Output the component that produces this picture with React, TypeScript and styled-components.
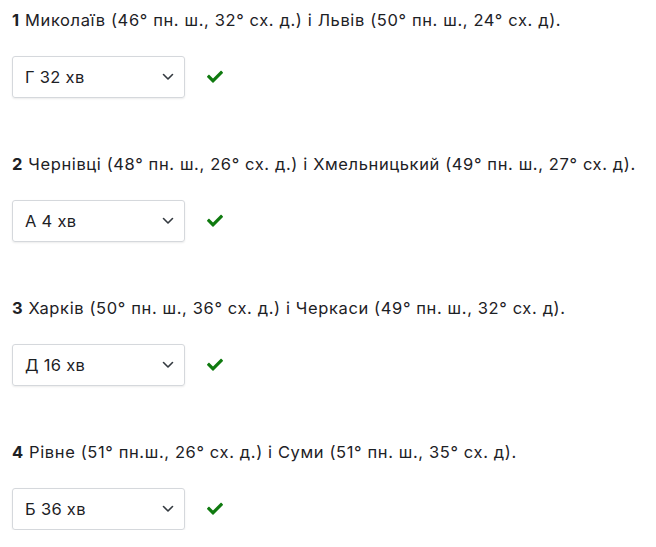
import React from "react";
import styled, { createGlobalStyle } from "styled-components";

const Global = createGlobalStyle`
  html, body { margin: 0; padding: 0; background: #fff; }
  body { font-family: Inter, "Noto Sans", sans-serif; color: #1d2125; }
`;

const Page = styled.div`
  padding: 8px 12px 0 12px;
  display: flex;
  flex-direction: column;
  gap: 54px;
`;

const Item = styled.div`
  display: flex;
  flex-direction: column;
`;

const Title = styled.div`
  font-size: 16.5px;
  letter-spacing: 0.62px;
  line-height: 24px;
  margin-bottom: 24px;
  white-space: nowrap;
`;

const Num = styled.b`
  font-weight: 700;
`;

const Row = styled.div`
  display: flex;
  align-items: center;
  gap: 22px;
`;

const Select = styled.div`
  box-sizing: border-box;
  width: 173px;
  height: 42px;
  border: 1px solid #d5d8dc;
  border-radius: 3px;
  box-shadow: 0 1px 2px rgba(0,0,0,0.08);
  display: flex;
  align-items: center;
  justify-content: space-between;
  padding: 0 10px 0 12px;
  font-size: 16.5px;
  letter-spacing: 0.3px;
`;

const Check = styled.svg`
  width: 16px;
  height: 14px;
  color: #0f7a0f;
`;

const Chevron = () => (
  <svg width="12" height="8" viewBox="0 0 12 8">
    <path d="M1.5 1.5 L6 6 L10.5 1.5" fill="none" stroke="#343a40" strokeWidth="1.6" strokeLinecap="round" strokeLinejoin="round" />
  </svg>
);

const items = [
  { n: 1, t: "Миколаїв (46° пн. ш., 32° сх. д.) і Львів (50° пн. ш., 24° сх. д).", a: "Г 32 хв" },
  { n: 2, t: "Чернівці (48° пн. ш., 26° сх. д.) і Хмельницький (49° пн. ш., 27° сх. д).", a: "А 4 хв" },
  { n: 3, t: "Харків (50° пн. ш., 36° сх. д.) і Черкаси (49° пн. ш., 32° сх. д).", a: "Д 16 хв" },
  { n: 4, t: "Рівне (51° пн.ш., 26° сх. д.) і Суми (51° пн. ш., 35° сх. д).", a: "Б 36 хв" },
];

export default function App() {
  return (
    <>
      <Global />
      <Page>
        {items.map((it) => (
          <Item key={it.n}>
            <Title>
              <Num>{it.n}</Num> {it.t}
            </Title>
            <Row>
              <Select>
                <span>{it.a}</span>
                <Chevron />
              </Select>
              <Check viewBox="0 0 512 448">
                <path fill="currentColor" d="M173.9 439.4 7.5 273c-10-10-10-26.2 0-36.2l36.2-36.2c10-10 26.2-10 36.2 0L192 312.7 432.1 72.6c10-10 26.2-10 36.2 0l36.2 36.2c10 10 10 26.2 0 36.2L210.1 439.4c-10 10-26.2 10-36.2 0z" transform="translate(0,-40)" />
              </Check>
            </Row>
          </Item>
        ))}
      </Page>
    </>
  );
}
